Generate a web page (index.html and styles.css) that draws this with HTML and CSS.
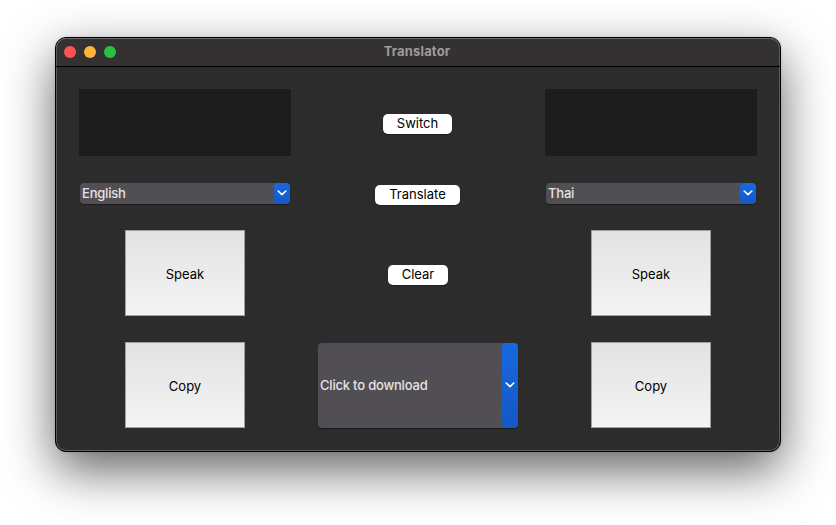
FILE: index.html
```html
<!DOCTYPE html>
<html lang="en">
<head>
<meta charset="utf-8">
<title>Translator</title>
<link rel="stylesheet" href="styles.css">
</head>
<body>
<main class="window">
  <header class="titlebar">
    <div class="lights"><i class="light close"></i><i class="light minimize"></i><i class="light maximize"></i></div>
    <h1 class="title">Translator</h1>
  </header>
  <section class="content">
    <div class="textarea"></div>
    <button class="push push-switch">Switch</button>
    <div class="textarea"></div>

    <div class="combo">
      <span class="value">English</span>
      <span class="arrow"><svg width="10" height="6" viewBox="0 0 10 6"><path d="M1.2 1 5 4.6 8.8 1"/></svg></span>
    </div>
    <button class="push push-translate">Translate</button>
    <div class="combo">
      <span class="value">Thai</span>
      <span class="arrow"><svg width="10" height="6" viewBox="0 0 10 6"><path d="M1.2 1 5 4.6 8.8 1"/></svg></span>
    </div>

    <button class="tile">Speak</button>
    <button class="push push-clear">Clear</button>
    <button class="tile">Speak</button>

    <button class="tile">Copy</button>
    <div class="combo combo-large">
      <span class="value">Click to download</span>
      <span class="arrow"><svg width="10" height="6" viewBox="0 0 10 6"><path d="M1.2 1 5 4.6 8.8 1"/></svg></span>
    </div>
    <button class="tile">Copy</button>
  </section>
</main>
</body>
</html>
```
FILE: styles.css
```css
* { box-sizing: border-box; }

body {
  margin: 0;
  height: 525px;
  padding: 37px 55px 0;
  overflow: hidden;
  background: #fff;
  font: 13px/16px Inter, "Liberation Sans", sans-serif;
}

.window {
  width: 726px;
  height: 415px;
  border: 1px solid #000;
  border-radius: 11px;
  background: #2c2c2c;
  box-shadow: inset 0 0 0 1px #5c5c5c, 0 18px 50px rgba(0, 0, 0, .62), 0 0 3px rgba(0, 0, 0, .12);
}

.titlebar {
  display: grid;
  grid-template-columns: 1fr auto 1fr;
  align-items: center;
  height: 29px;
  padding: 0 8px;
  border-bottom: 1px solid #000;
  border-radius: 10px 10px 0 0;
  background: #343132;
  box-shadow: inset 1px 0 #5c5c5c, inset -1px 0 #5c5c5c, inset 0 1px #6b6a6a;
}

.lights { display: flex; gap: 8px; }
.light { width: 12px; height: 12px; border-radius: 50%; }
.close { background: #ff5450; }
.minimize { background: #ffb43a; }
.maximize { background: #2ac140; }

.title {
  margin: 0;
  padding: 0 2px 2px 0;
  color: #9d9b9c;
  font-size: 13px;
  font-weight: 700;
  line-height: 16px;
  letter-spacing: .15px;
}

.content {
  display: grid;
  grid-template-columns: 212px 254px 212px;
  grid-template-rows: 67px 22px 86px 86px;
  row-gap: 26px;
  justify-items: center;
  align-items: center;
  padding: 22px 23px 0;
}

.textarea { width: 212px; height: 67px; background: #1d1d1d; }

button {
  padding: 0;
  border: 0;
  color: #000;
  font: inherit;
}

.push {
  height: 20px;
  padding-bottom: 2px;
  border-radius: 5px;
  background: #fff;
  box-shadow: 0 1px 1px rgba(0, 0, 0, .3);
}
.push-switch { width: 69px; margin: 3px 1px 0 0; }
.push-translate { width: 85px; margin: 4px 1px 0 0; }
.push-clear { width: 60px; margin-top: 4px; }

.combo {
  display: flex;
  align-items: center;
  width: 210px;
  height: 21px;
  margin-top: 1px;
  overflow: hidden;
  border-radius: 4px;
  background: #514e54;
  box-shadow: 0 1px 1px rgba(0, 0, 0, .4);
  color: #e5e4e5;
}
.combo-large { width: 200px; height: 85px; }

.value {
  flex: 1;
  padding: 0 0 2px 2px;
  font-weight: 500;
  letter-spacing: -.2px;
}

.arrow {
  display: flex;
  align-items: center;
  justify-content: center;
  align-self: stretch;
  width: 16px;
  padding-bottom: 1px;
  border-radius: 4px;
  background: linear-gradient(#1769e0, #1458c4);
}
.arrow path {
  fill: none;
  stroke: #fff;
  stroke-width: 1.6;
  stroke-linecap: round;
  stroke-linejoin: round;
}

.tile {
  width: 120px;
  height: 86px;
  padding-top: 1px;
  border: 1px solid #a0a0a0;
  background: linear-gradient(#e2e2e2, #f4f4f4);
}
```
